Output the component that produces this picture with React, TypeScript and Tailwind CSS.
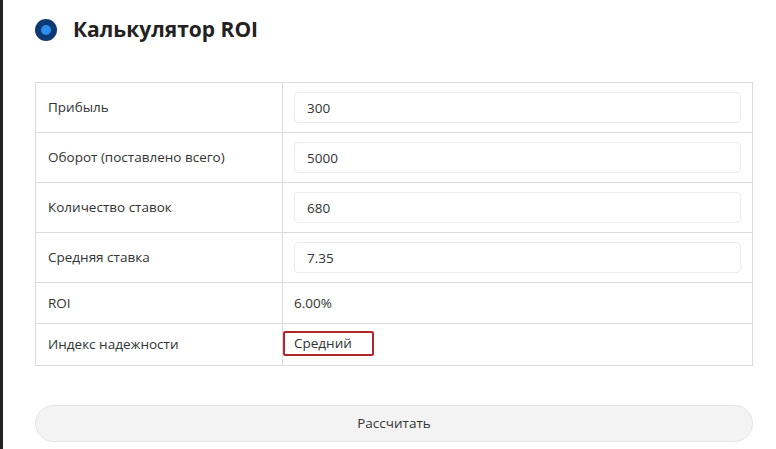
const ROWS = [
  { label: 'Прибыль', value: '300' },
  { label: 'Оборот (поставлено всего)', value: '5000' },
  { label: 'Количество ставок', value: '680' },
  { label: 'Средняя ставка', value: '7.35' },
];

export default function App() {
  return (
    <div
      className="flex h-[449px] w-[776px] overflow-hidden bg-white text-[#333]"
      style={{ fontFamily: '"Open Sans", "Noto Sans", sans-serif' }}
    >
      <div className="w-[3px] shrink-0 bg-[#222]" />
      <div className="flex-1 pl-[32px] pr-[23px]">
        {/* Header */}
        <div className="flex h-[60px] items-center gap-[16px] pb-[1px]">
          <span className="flex h-[22px] w-[22px] items-center justify-center rounded-full bg-[#0c3b73]">
            <span className="h-[10px] w-[10px] rounded-full bg-[#2e8ef0]" />
          </span>
          <h1 className="text-[21px] font-bold text-[#222]">Калькулятор ROI</h1>
        </div>

        {/* Calculator table */}
        <table className="mt-[22px] w-full border-collapse text-[13.5px]">
          <tbody>
            {ROWS.map((row) => (
              <tr key={row.label} className="h-[50px]">
                <td className="w-[247px] border border-[#dcdcdc] px-[12px]">{row.label}</td>
                <td className="border border-[#dcdcdc] px-[11px]">
                  <input
                    readOnly
                    value={row.value}
                    className="h-[31px] w-full rounded-[4px] border border-[#ececec] bg-white px-[12px] text-[13.5px] text-[#333] outline-none"
                  />
                </td>
              </tr>
            ))}
            <tr className="h-[41px]">
              <td className="border border-[#dcdcdc] px-[12px]">ROI</td>
              <td className="border border-[#dcdcdc] px-[11px]">6.00%</td>
            </tr>
            <tr className="h-[42px]">
              <td className="border border-[#dcdcdc] px-[12px]">Индекс надежности</td>
              <td className="border border-[#dcdcdc] px-0 pb-[3px]">
                <span className="inline-block h-[25px] w-[91px] rounded-[2px] border-2 border-[#b3262a] pl-[9px] leading-[21px]">
                  Средний
                </span>
              </td>
            </tr>
          </tbody>
        </table>

        <button className="mt-[39px] h-[37px] w-full rounded-full border border-[#e6e6e6] bg-[#f3f3f3] text-[13.5px] text-[#333]">
          Рассчитать
        </button>
      </div>
    </div>
  );
}
